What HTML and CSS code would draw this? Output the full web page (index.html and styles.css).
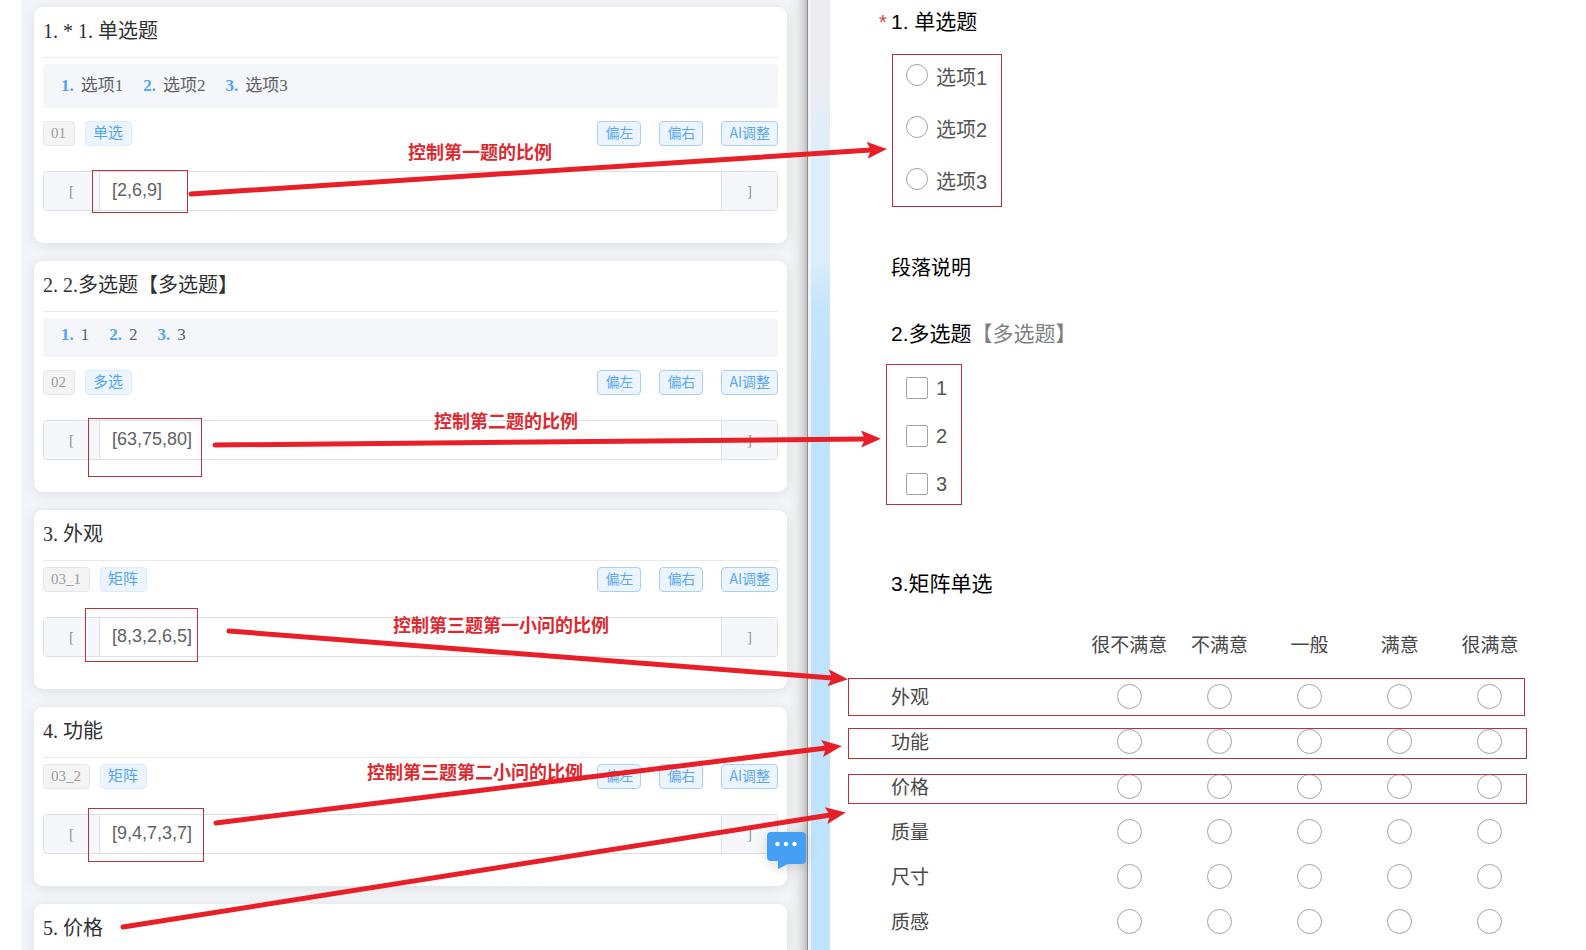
FILE: index.html
```html
<!DOCTYPE html>
<html lang="zh-CN">
<head>
<meta charset="utf-8">
<title>问卷比例设置</title>
<link rel="stylesheet" href="styles.css">
</head>
<body>
<div class="page">
  <main class="editor">
    <section class="card">
      <h2 class="card-title">1. * 1. 单选题</h2>
      <ol class="options">
        <li><b>1.</b><span>选项1</span></li>
        <li><b>2.</b><span>选项2</span></li>
        <li><b>3.</b><span>选项3</span></li>
      </ol>
      <div class="toolbar">
        <span class="tag">01</span><span class="tag tag-type">单选</span>
        <div class="actions"><button type="button">偏左</button><button type="button">偏右</button><button type="button">AI调整</button></div>
      </div>
      <div class="field"><span class="affix">[</span><input type="text" value="[2,6,9]" aria-label="第1题比例"><span class="affix">]</span></div>
    </section>
    <section class="card">
      <h2 class="card-title">2. 2.多选题【多选题】</h2>
      <ol class="options">
        <li><b>1.</b><span>1</span></li>
        <li><b>2.</b><span>2</span></li>
        <li><b>3.</b><span>3</span></li>
      </ol>
      <div class="toolbar">
        <span class="tag">02</span><span class="tag tag-type">多选</span>
        <div class="actions"><button type="button">偏左</button><button type="button">偏右</button><button type="button">AI调整</button></div>
      </div>
      <div class="field"><span class="affix">[</span><input type="text" value="[63,75,80]" aria-label="第2题比例"><span class="affix">]</span></div>
    </section>
    <section class="card">
      <h2 class="card-title">3. 外观</h2>
      <div class="toolbar">
        <span class="tag">03_1</span><span class="tag tag-type">矩阵</span>
        <div class="actions"><button type="button">偏左</button><button type="button">偏右</button><button type="button">AI调整</button></div>
      </div>
      <div class="field"><span class="affix">[</span><input type="text" value="[8,3,2,6,5]" aria-label="外观比例"><span class="affix">]</span></div>
    </section>
    <section class="card">
      <h2 class="card-title">4. 功能</h2>
      <div class="toolbar">
        <span class="tag">03_2</span><span class="tag tag-type">矩阵</span>
        <div class="actions"><button type="button">偏左</button><button type="button">偏右</button><button type="button">AI调整</button></div>
      </div>
      <div class="field"><span class="affix">[</span><input type="text" value="[9,4,7,3,7]" aria-label="功能比例"><span class="affix">]</span></div>
    </section>
    <section class="card card-last">
      <h2 class="card-title">5. 价格</h2>
    </section>
    <button type="button" class="chat" aria-label="在线客服">
      <svg width="39" height="38" viewBox="0 0 39 38" aria-hidden="true">
        <path fill="#459ff5" d="M4 0h31a4 4 0 0 1 4 4v24a4 4 0 0 1-4 4H21l-10 5V29H4a4 4 0 0 1-4-4V4a4 4 0 0 1 4-4z"/>
        <circle cx="10.500" cy="12" r="2.200" fill="#fff"/><circle cx="19" cy="12" r="2.200" fill="#fff"/><circle cx="27.500" cy="12" r="2.200" fill="#fff"/>
      </svg>
    </button>
  </main>

  <div class="divider"></div>

  <form class="survey">
    <fieldset class="question">
      <legend class="question-title"><span class="required">*</span>1. 单选题</legend>
      <label class="choice"><input type="radio" name="q1"><span>选项1</span></label>
      <label class="choice"><input type="radio" name="q1"><span>选项2</span></label>
      <label class="choice"><input type="radio" name="q1"><span>选项3</span></label>
    </fieldset>
    <p class="paragraph">段落说明</p>
    <fieldset class="question question-multi">
      <legend class="question-title">2.多选题<span class="hint">【多选题】</span></legend>
      <label class="choice"><input type="checkbox"><span>1</span></label>
      <label class="choice"><input type="checkbox"><span>2</span></label>
      <label class="choice"><input type="checkbox"><span>3</span></label>
    </fieldset>
    <h3 class="question-title">3.矩阵单选</h3>
    <table class="matrix">
      <thead>
        <tr><td></td><th scope="col">很不满意</th><th scope="col">不满意</th><th scope="col">一般</th><th scope="col">满意</th><th scope="col">很满意</th></tr>
      </thead>
      <tbody>
        <tr><th scope="row">外观</th><td><input type="radio" name="m1" aria-label="外观 很不满意"></td><td><input type="radio" name="m1" aria-label="外观 不满意"></td><td><input type="radio" name="m1" aria-label="外观 一般"></td><td><input type="radio" name="m1" aria-label="外观 满意"></td><td><input type="radio" name="m1" aria-label="外观 很满意"></td></tr>
        <tr><th scope="row">功能</th><td><input type="radio" name="m2" aria-label="功能 很不满意"></td><td><input type="radio" name="m2" aria-label="功能 不满意"></td><td><input type="radio" name="m2" aria-label="功能 一般"></td><td><input type="radio" name="m2" aria-label="功能 满意"></td><td><input type="radio" name="m2" aria-label="功能 很满意"></td></tr>
        <tr><th scope="row">价格</th><td><input type="radio" name="m3" aria-label="价格 很不满意"></td><td><input type="radio" name="m3" aria-label="价格 不满意"></td><td><input type="radio" name="m3" aria-label="价格 一般"></td><td><input type="radio" name="m3" aria-label="价格 满意"></td><td><input type="radio" name="m3" aria-label="价格 很满意"></td></tr>
        <tr><th scope="row">质量</th><td><input type="radio" name="m4" aria-label="质量 很不满意"></td><td><input type="radio" name="m4" aria-label="质量 不满意"></td><td><input type="radio" name="m4" aria-label="质量 一般"></td><td><input type="radio" name="m4" aria-label="质量 满意"></td><td><input type="radio" name="m4" aria-label="质量 很满意"></td></tr>
        <tr><th scope="row">尺寸</th><td><input type="radio" name="m5" aria-label="尺寸 很不满意"></td><td><input type="radio" name="m5" aria-label="尺寸 不满意"></td><td><input type="radio" name="m5" aria-label="尺寸 一般"></td><td><input type="radio" name="m5" aria-label="尺寸 满意"></td><td><input type="radio" name="m5" aria-label="尺寸 很满意"></td></tr>
        <tr><th scope="row">质感</th><td><input type="radio" name="m6" aria-label="质感 很不满意"></td><td><input type="radio" name="m6" aria-label="质感 不满意"></td><td><input type="radio" name="m6" aria-label="质感 一般"></td><td><input type="radio" name="m6" aria-label="质感 满意"></td><td><input type="radio" name="m6" aria-label="质感 很满意"></td></tr>
      </tbody>
    </table>
  </form>

  <svg class="notes">
    <defs>
      <marker id="head" markerUnits="userSpaceOnUse" markerWidth="20" markerHeight="17" refX="4" refY="8.500" orient="auto">
        <path d="M0 0L20 8.500L0 17L4 8.500z" fill="#e81f27"/>
      </marker>
    </defs>
    <g class="frames">
      <rect x="92.500" y="170.500" width="95" height="42"/>
      <rect x="88.500" y="418.500" width="113" height="58"/>
      <rect x="85.500" y="608.500" width="112" height="53"/>
      <rect x="88.500" y="808.500" width="115" height="53"/>
      <rect x="892.500" y="54.500" width="109" height="152"/>
      <rect x="886.500" y="364.500" width="75" height="140"/>
      <rect x="848.500" y="678.500" width="676" height="37"/>
      <rect x="848.500" y="728.500" width="678" height="30"/>
      <rect x="848.500" y="774.500" width="678" height="29"/>
    </g>
    <g class="labels">
      <text x="408" y="159">控制第一题的比例</text>
      <text x="434" y="428">控制第二题的比例</text>
      <text x="393" y="632">控制第三题第一小问的比例</text>
      <text x="367" y="779">控制第三题第二小问的比例</text>
    </g>
    <g class="arrows">
      <path d="M191 194L871 150"/>
      <path d="M215 445L865 439"/>
      <path d="M229 631L832 678"/>
      <path d="M216 823L826 748"/>
      <path d="M123 927L830 815"/>
    </g>
  </svg>
</div>
</body>
</html>
```
FILE: styles.css
```css
* {
  box-sizing: border-box;
}

body {
  margin: 0;
  background: #fff;
}

h2,
h3,
p,
ol,
fieldset {
  margin: 0;
  padding: 0;
  border: 0;
  font-weight: 400;
}

input {
  margin: 0;
}

.page {
  position: relative;
  display: grid;
  grid-template-columns: minmax(0, 808fr) 22px minmax(0, 756fr);
  grid-template-rows: minmax(0, 100%);
  height: 100vh;
  overflow: hidden;
}

/* Ratio editor */

.editor {
  position: relative;
  display: flex;
  flex-direction: column;
  gap: 18px;
  padding: 7px 21px 0 13px;
  border-left: 21px solid #fff;
  background: linear-gradient(to left, #8b8b8b 1px, #bfc1c2 1px, #d9dbdc 6px, #eceef0 12px, #f3f5f8 20px);
  font-family: "Liberation Serif", "Noto Sans CJK SC", serif;
}

.card {
  flex: none;
  padding: 0 9px 32px;
  border-radius: 9px;
  background: #fff;
  box-shadow: 0 2px 13px rgba(0, 0, 0, 0.1);
}

.card-last {
  min-height: 180px;
}

.card-title {
  height: 51px;
  margin-bottom: 6px;
  border-bottom: 1px solid #e8eaee;
  color: #303133;
  font-size: 20px;
  line-height: 49px;
}

.options {
  display: flex;
  gap: 20px;
  margin-bottom: 13px;
  padding: 7px 18px 12px;
  border-radius: 4px;
  background: #f4f6fa;
  color: #606266;
  font-size: 17px;
  list-style: none;
}

.options li {
  display: flex;
  align-items: baseline;
  gap: 7px;
}

.options b {
  color: #53a3f0;
}

.toolbar {
  display: flex;
  gap: 10px;
  margin-bottom: 25px;
}

.tag {
  height: 25px;
  padding: 0 8px 0 7px;
  border: 1px solid #e6e6e8;
  border-radius: 4px;
  background: #f4f4f5;
  color: #9a9ca0;
  font-size: 15px;
  line-height: 22px;
}

.tag-type {
  border-color: #d9ecff;
  background: #ecf5ff;
  color: #53a3f0;
}

.actions {
  display: flex;
  gap: 18px;
  margin-left: auto;
}

.actions button {
  height: 25px;
  padding: 0 7px 3px;
  border: 1px solid #a9d0f7;
  border-radius: 4px;
  background: #ecf5ff;
  color: #5ba7f0;
  font-family: "Noto Sans CJK SC", sans-serif;
  font-size: 14px;
  line-height: 20px;
}

.field {
  display: flex;
  height: 40px;
  border: 1px solid #dcdfe6;
  border-radius: 4px;
  background: #fff;
  overflow: hidden;
}

.affix {
  flex: none;
  width: 55px;
  background: #f5f7fa;
  color: #909399;
  font-size: 15px;
  line-height: 38px;
  text-align: center;
}

.field input {
  flex: 1;
  min-width: 0;
  padding: 0 12px 2px;
  border: solid #dcdfe6;
  border-width: 0 1px;
  background: #fff;
  color: #606266;
  font-family: "Liberation Sans", sans-serif;
  font-size: 18px;
}

.chat {
  position: absolute;
  right: 2px;
  bottom: 80px;
  padding: 0;
  border: 0;
  background: none;
  filter: drop-shadow(0 2px 6px rgba(0, 0, 0, 0.15));
}

.chat svg {
  display: block;
}

.divider {
  border-left: 3px solid #f3f3f4;
  background: linear-gradient(#ececf0 80px, #dceef9 160px, #dceef9 260px, #c3e4fb 310px, #bfe3fc 400px);
}

/* Survey */

.survey {
  padding: 7px 51px 0 61px;
  color: #000;
  font-family: "Liberation Sans", "Noto Sans CJK SC", sans-serif;
}

.question-title {
  position: relative;
  height: 30px;
  padding: 0;
  font-size: 21px;
  line-height: 30px;
}

.required {
  position: absolute;
  right: 100%;
  margin-right: 4px;
  color: #e0444a;
}

.hint {
  color: #808080;
}

.question {
  margin-bottom: 48px;
}

.question-multi {
  margin-bottom: 61px;
}

.choice {
  display: flex;
  align-items: center;
  gap: 8px;
  height: 52px;
  padding-left: 15px;
  color: #555;
  font-size: 20px;
}

.question-title + .choice {
  margin-top: 12px;
}

.choice span {
  padding-top: 3px;
}

.question-multi .choice {
  height: 48px;
}

.question-multi .question-title + .choice {
  margin-top: 15px;
}

.question-multi span {
  padding-top: 0;
}

.survey input {
  display: block;
  width: 22px;
  height: 22px;
  border: 1px solid #a3a3a3;
  border-radius: 2px;
  background: #fff;
  appearance: none;
}

.survey input[type="radio"] {
  border-radius: 50%;
}

.paragraph {
  margin-bottom: 36px;
  font-size: 20px;
  line-height: 30px;
}

.matrix {
  width: 100%;
  margin-top: 19px;
  border-collapse: collapse;
  table-layout: fixed;
  color: #484848;
  font-size: 19px;
}

.matrix th,
.matrix td {
  width: 14%;
  height: 45px;
  padding: 0;
  font-weight: 400;
  line-height: 28px;
  white-space: nowrap;
}

.matrix tr > :first-child {
  width: 30%;
  text-align: left;
}

.matrix thead th {
  height: 56px;
}

.matrix tbody th {
  padding-top: 3px;
}

.survey .matrix input {
  width: 25px;
  height: 25px;
  margin: 0 auto;
}

/* Annotations over both panes */

.notes {
  position: absolute;
  inset: 0;
  width: 100%;
  height: 100%;
  pointer-events: none;
}

.frames {
  fill: none;
  stroke: #b8343a;
}

.labels {
  fill: #dc2a30;
  font: bold 18px "Noto Sans CJK SC", sans-serif;
}

.arrows {
  fill: none;
  stroke: #e81f27;
  stroke-width: 5px;
  stroke-linecap: round;
}

.arrows path {
  marker-end: url(#head);
}
```
